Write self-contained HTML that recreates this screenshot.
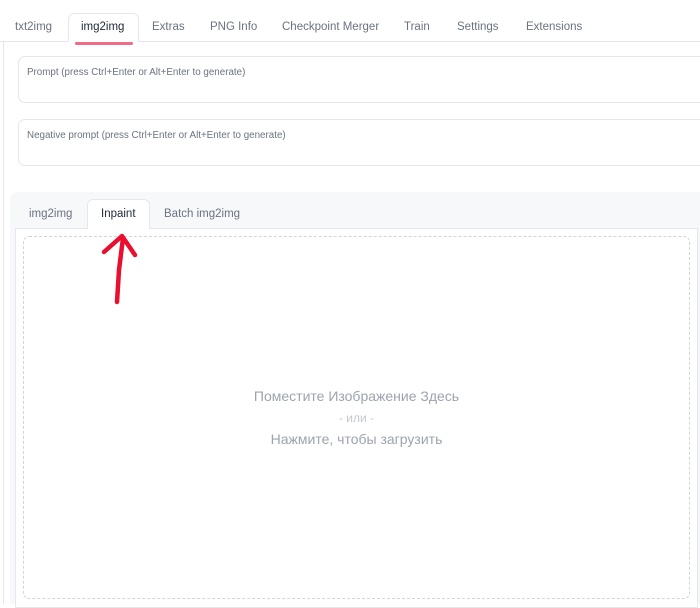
<!DOCTYPE html>
<html><head><meta charset="utf-8"><style>
*{box-sizing:border-box;margin:0;padding:0}
body{width:700px;height:604px;overflow:hidden;background:#fff;font-family:"Liberation Sans","DejaVu Sans",sans-serif;position:relative}
.a{position:absolute}
.t{position:absolute;font-size:11.5px;color:#6b7280;top:21px}
</style></head><body>
<div class="a" style="left:0;top:41px;width:700px;height:1px;background:#e5e7eb"></div>
<div class="a" style="left:3px;top:41px;width:1px;height:563px;background:#e5e7eb"></div>
<div class="a" style="left:68px;top:13px;width:71px;height:29px;border:1px solid #e5e7eb;border-bottom:none;border-radius:6px 6px 0 0;background:#fff"></div>
<div class="t" style="left:15px">txt2img</div>
<div class="t" style="left:81px;color:#1f2937">img2img</div>
<div class="a" style="left:75px;top:42px;width:58px;height:3px;border-radius:2px;background:#f06b85"></div>
<div class="t" style="left:152px">Extras</div>
<div class="t" style="left:210px">PNG Info</div>
<div class="t" style="left:282px">Checkpoint Merger</div>
<div class="t" style="left:404px">Train</div>
<div class="t" style="left:457px">Settings</div>
<div class="t" style="left:526px">Extensions</div>

<div class="a" style="left:18px;top:56px;width:700px;height:47px;border:1px solid #e5e7eb;border-radius:7px"></div>
<div class="a" style="left:27px;top:67px;font-size:9.8px;color:#6b7280">Prompt (press Ctrl+Enter or Alt+Enter to generate)</div>
<div class="a" style="left:18px;top:119px;width:700px;height:47px;border:1px solid #e5e7eb;border-radius:7px"></div>
<div class="a" style="left:27px;top:130px;font-size:9.8px;color:#6b7280">Negative prompt (press Ctrl+Enter or Alt+Enter to generate)</div>

<div class="a" style="left:10px;top:192px;width:700px;height:412px;background:#f7f8fa;border-radius:8px 0 0 0"></div>
<div class="a" style="left:15px;top:228px;width:683px;height:380px;border:1px solid #e5e7eb;background:#fff"></div>
<div class="a" style="left:87px;top:199px;width:63px;height:30px;border:1px solid #e5e7eb;border-bottom:none;border-radius:6px 6px 0 0;background:#fff"></div>
<div class="t" style="left:29px;top:208px">img2img</div>
<div class="t" style="left:101px;top:208px;color:#1f2937">Inpaint</div>
<div class="t" style="left:164px;top:208px">Batch img2img</div>
<div class="a" style="left:23px;top:236px;width:667px;height:363px;border:1px dashed #d1d5db;border-radius:6px"></div>
<div class="a" style="left:23px;top:386px;width:667px;text-align:center;color:#9ca3af;font-size:14px;line-height:21px">Поместите Изображение Здесь<br><span style="font-size:12px;color:#c4c8cf">- или -</span><br>Нажмите, чтобы загрузить</div>
<svg class="a" style="left:0;top:0" width="700" height="604"><path d="M117 302 L119 270 L123 238 M104 252 L122 236 L135 255" stroke="#e8102e" stroke-width="4.5" fill="none" stroke-linecap="round" stroke-linejoin="round"/></svg>
</body></html>
